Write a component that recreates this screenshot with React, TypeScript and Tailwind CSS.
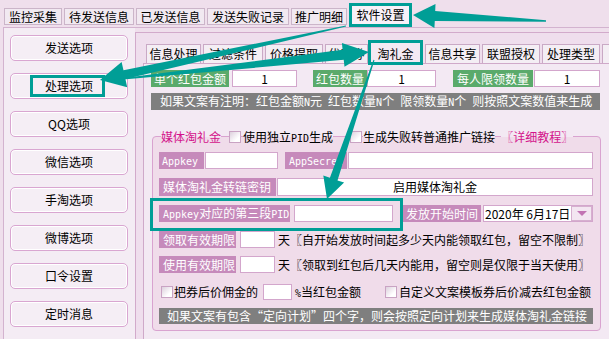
import React from "react";

const TEAL = "#009e96";
const TB = "bg-[linear-gradient(to_bottom,#f3e9f3_50%,#f0dcea_50%)]";

function arrowPoints(
  x0: number, y0: number, x1: number, y1: number,
  hl: number, hw: number, sw: number, tw: number
) {
  const dx = x1 - x0, dy = y1 - y0;
  const L = Math.hypot(dx, dy);
  const ux = dx / L, uy = dy / L;
  const nx = -uy, ny = ux;
  const bx = x1 - ux * hl, by = y1 - uy * hl;
  const pts = [
    [x0 + (nx * tw) / 2, y0 + (ny * tw) / 2],
    [bx + (nx * sw) / 2, by + (ny * sw) / 2],
    [bx + (nx * hw) / 2, by + (ny * hw) / 2],
    [x1, y1],
    [bx - (nx * hw) / 2, by - (ny * hw) / 2],
    [bx - (nx * sw) / 2, by - (ny * sw) / 2],
    [x0 - (nx * tw) / 2, y0 - (ny * tw) / 2],
  ];
  return pts.map((p) => p.map((v) => v.toFixed(1)).join(",")).join(" ");
}

function M({ children }: { children: React.ReactNode }) {
  return <span className="font-['DejaVu_Sans_Mono',monospace] text-[10px]">{children}</span>;
}

function GreenLabel({ className = "", children }: { className?: string; children: React.ReactNode }) {
  return (
    <div className={"h-[17px] bg-[#5aaa6b] text-white flex items-center justify-center leading-none whitespace-nowrap " + className}>
      {children}
    </div>
  );
}

function PLabel({ className = "", children }: { className?: string; children: React.ReactNode }) {
  return (
    <div className={"h-full bg-[#c68abb] text-white flex items-center leading-none whitespace-nowrap " + className}>
      <span>{children}</span>
    </div>
  );
}

function Input({ className = "", children }: { className?: string; children?: React.ReactNode }) {
  return (
    <div className={"h-full bg-white border border-[#d3a6cc] flex items-center justify-center leading-none whitespace-nowrap " + className}>
      {children}
    </div>
  );
}

function Checkbox({ className = "" }: { className?: string }) {
  return (
    <div className={"w-[12px] h-[12px] shrink-0 border border-[#c9a3c3] bg-[linear-gradient(135deg,#ddd0dd,#ffffff_70%)] " + className} />
  );
}

const topTabs = [
  { t: "监控采集", w: "w-[58px]" },
  { t: "待发送信息", w: "w-[70px]" },
  { t: "已发送信息", w: "w-[69px]" },
  { t: "发送失败记录", w: "w-[82px]" },
  { t: "推广明细", w: "w-[56px]" },
];

const innerTabs = [
  { t: "信息处理", w: "w-[55px]", ml: "" },
  { t: "过滤条件", w: "w-[60px]", ml: "ml-[2px]" },
  { t: "价格提取", w: "w-[58px]", ml: "ml-[2px]" },
  { t: "优惠券", w: "w-[43px]", ml: "ml-[2px]" },
];
const innerTabs2 = [
  { t: "信息共享", w: "w-[55px]" },
  { t: "联盟授权", w: "w-[58px]" },
  { t: "处理类型", w: "w-[58px]" },
];

const sideButtons = ["发送选项", "处理选项", "QQ选项", "微信选项", "手淘选项", "微博选项", "口令设置", "定时消息"];

export default function App() {
  return (
    <div className="relative w-[609px] h-[339px] overflow-hidden bg-[#efdfec] text-[12px] text-black font-['Noto_Sans_CJK_SC','Noto_Sans',sans-serif] flex flex-col">
      {/* top tabs */}
      <div className="h-[27px] shrink-0 flex items-end pl-[4px] gap-[2px]">
        {topTabs.map((x) => (
          <div key={x.t} className={"h-[17px] mb-[2px] border border-[#cbb5c9] bg-[#f1e9f1] flex items-center justify-center leading-none whitespace-nowrap " + x.w}>
            {x.t}
          </div>
        ))}
        <div className="w-[63px] h-[24px] border border-[#cbb5c9] bg-[#f8f1f8] flex items-center justify-center leading-none whitespace-nowrap">
          软件设置
        </div>
      </div>

      {/* body */}
      <div className="flex flex-1 min-h-0 ml-[3px] border-l border-t border-[#d3b3cf]">
        {/* sidebar */}
        <div className="w-[131px] shrink-0 bg-[#f4ecf4] flex flex-col gap-[12px] pt-[7px] pl-[6px]">
          {sideButtons.map((b) => (
            <div key={b} className="w-[118px] h-[26px] shrink-0 rounded-[5px] border border-[#d9a6d1] bg-[#f5eef5] shadow-[inset_0_0_0_1px_#ffffff] flex items-center justify-center leading-none">
              {b}
            </div>
          ))}
        </div>

        {/* right panel */}
        <div className="flex-1 min-w-0 mt-[4px] border-l border-t border-[#d2aacb] bg-[#efdeed] pl-[7px] pt-[11px] flex flex-col">
          {/* inner tabs */}
          <div className="h-[19px] shrink-0 flex items-end pl-[3px] overflow-visible">
            {innerTabs.map((x) => (
              <div key={x.t} className={"h-[19px] shrink-0 border border-b-0 border-[#c9a9c5] bg-[#f4eef4] flex items-center justify-center leading-none whitespace-nowrap " + x.w + " " + x.ml}>
                {x.t}
              </div>
            ))}
            <div className="w-[55px] h-[22px] shrink-0 border border-b-0 border-[#c9a9c5] bg-[#f3e9f3] flex items-center justify-center leading-none whitespace-nowrap relative top-[1px]">
              淘礼金
            </div>
            {innerTabs2.map((x) => (
              <div key={x.t} className={"h-[19px] shrink-0 ml-[2px] border border-b-0 border-[#c9a9c5] bg-[#f4eef4] flex items-center justify-center leading-none whitespace-nowrap " + x.w}>
                {x.t}
              </div>
            ))}
            <div className="h-[19px] w-[40px] shrink-0 ml-[2px] border border-b-0 border-[#c9a9c5] bg-[#f4eef4]" />
          </div>

          {/* inner content */}
          <div className="flex-1 border-l border-t border-[#cfa9c9] bg-[#f3e9f3] pl-[7px] pt-[6px]">
            <div className="flex items-center h-[17px]">
              <GreenLabel className="w-[78px]">单个红包金额</GreenLabel>
              <Input className="ml-[3px] w-[65px]">1</Input>
              <GreenLabel className="ml-[16px] w-[54px]">红包数量</GreenLabel>
              <Input className="w-[69px]">1</Input>
              <GreenLabel className="ml-[17px] w-[80px]">每人限领数量</GreenLabel>
              <Input className="ml-[1px] w-[66px]">1</Input>
            </div>

            <div className="mt-[6px] h-[17px] w-[449px] bg-[#7f7f7f] text-white flex items-center pl-[9px] leading-none whitespace-pre">
              <span>
                如果文案有注明：红包金额<M>N</M>元<M> </M>红包数量<M>N</M>个<M> </M>限领数量<M>N</M>个<M> </M>则按照文案数值来生成
              </span>
            </div>

            {/* group */}
            <div className="mt-[26px] ml-[1px] w-[449px] border border-[#d9a3d0] rounded-[4px] bg-[#f0dcea] pb-[6px]">
              <div className="-mt-[7px] h-[14px] flex items-center whitespace-nowrap leading-none">
                <span className={"ml-[8px] h-[14px] flex items-center text-[#d3148b] " + TB}>媒体淘礼金</span>
                <Checkbox className="ml-[8px]" />
                <span className={"ml-[2px] h-[14px] flex items-center " + TB}>
                  <span>
                    使用独立<M>PID</M>生成
                  </span>
                </span>
                <Checkbox className="ml-[17px]" />
                <span className={"ml-[1px] h-[14px] flex items-center " + TB}>生成失败转普通推广链接</span>
                <span className={"ml-[6px] h-[14px] flex items-center text-[#d3148b] " + TB}>〖详细教程〗</span>
              </div>

              <div className="pl-[6px]">
                <div className="mt-[8px] flex items-center h-[17px]">
                  <PLabel className="w-[45px] pl-[3px]">
                    <M>Appkey</M>
                  </PLabel>
                  <Input className="ml-[1px] w-[73px]" />
                  <PLabel className="ml-[7px] w-[62px] pl-[4px]">
                    <M>AppSecret</M>
                  </PLabel>
                  <Input className="ml-[1px] w-[245px]" />
                </div>

                <div className="mt-[9px] flex items-center h-[18px]">
                  <PLabel className="w-[117px] pl-[4px]">媒体淘礼金转链密钥</PLabel>
                  <Input className="ml-[1px] w-[316px]">启用媒体淘礼金</Input>
                </div>

                <div className="mt-[9px] flex items-center h-[17px]">
                  <PLabel className="w-[131px] pl-[4px]">
                    <M>Appkey</M>对应的第三段<M>PID</M>
                  </PLabel>
                  <Input className="ml-[4px] w-[99px]" />
                  <PLabel className="ml-[10px] w-[78px] pl-[3px]">发放开始时间</PLabel>
                  <div className="ml-[2px] w-[110px] h-full bg-white border border-[#d3a6cc] flex items-center leading-none whitespace-nowrap">
                    <span className="pl-[1px]">2020年 6月17日</span>
                    <div className="ml-auto w-[21px] h-[15px] bg-[#f3e6f1] border border-[#d6b0cf] flex items-center justify-center">
                      <div className="w-0 h-0 border-x-[5px] border-x-transparent border-t-[5px] border-t-[#c274b3]" />
                    </div>
                  </div>
                </div>

                <div className="mt-[9px] flex items-center h-[17px]">
                  <PLabel className="w-[77px] pl-[4px]">领取有效期限</PLabel>
                  <Input className="ml-[4px] w-[35px]" />
                  <span className="ml-[3px] leading-none whitespace-nowrap">天〖自开始发放时间起多少天内能领取红包，留空不限制〗</span>
                </div>

                <div className="mt-[8px] flex items-center h-[17px]">
                  <PLabel className="w-[77px] pl-[4px]">使用有效期限</PLabel>
                  <Input className="ml-[4px] w-[35px]" />
                  <span className="ml-[3px] leading-none whitespace-nowrap">天〖领取到红包后几天内能用，留空则是仅限于当天使用〗</span>
                </div>

                <div className="mt-[11px] flex items-center h-[16px]">
                  <div className="w-[226px] flex items-center h-full">
                    <Checkbox className="ml-[2px]" />
                    <span className="ml-[1px] leading-none whitespace-nowrap">把券后价佣金的</span>
                    <Input className="ml-[5px] w-[29px]" />
                    <span className="ml-[3px] leading-none whitespace-nowrap">
                      <M>%</M>当红包金额
                    </span>
                  </div>
                  <Checkbox />
                  <span className="ml-[2px] leading-none whitespace-nowrap">自定义文案模板券后价减去红包金额</span>
                </div>

                <div className="mt-[8px] h-[16px] w-[434px] bg-[#7f7f7f] text-white flex items-center pl-[8px] leading-none whitespace-nowrap">
                  如果文案有包含“定向计划”四个字，则会按照定向计划来生成媒体淘礼金链接
                </div>
              </div>
            </div>
          </div>
        </div>
      </div>

      {/* annotation overlay */}
      <svg className="absolute left-0 top-0 pointer-events-none" width="609" height="339" viewBox="0 0 609 339">
        <g fill="none" stroke={TEAL} strokeWidth="3">
          <rect x="350.5" y="4.5" width="60" height="21" />
          <rect x="31.5" y="76.5" width="72" height="19" />
          <rect x="369.5" y="41.5" width="52" height="22" />
          <rect x="151.5" y="199.5" width="250" height="30" />
        </g>
        <g fill={TEAL}>
          <polygon points={arrowPoints(546, 21, 413, 15, 22, 24, 10, 1.5)} />
          <polygon points={arrowPoints(346, 26, 100, 80, 25, 26, 9, 1)} />
          <polygon points={arrowPoints(112, 80, 369, 52, 26, 24, 10, 1)} />
          <polygon points={arrowPoints(374, 60, 327, 199, 21, 22, 8, 1)} />
        </g>
      </svg>
    </div>
  );
}
